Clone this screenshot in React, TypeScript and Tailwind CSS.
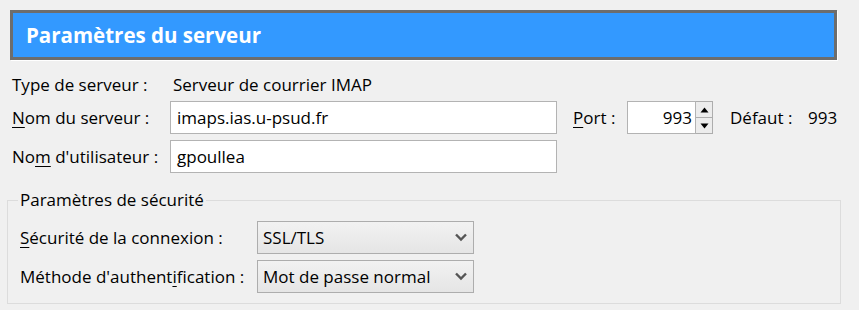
function Chevron() {
  return (
    <svg width="12" height="9" viewBox="0 0 12 9" className="shrink-0">
      <path d="M1 1.5 L6 6.5 L11 1.5" fill="none" stroke="#555" strokeWidth="2.4" />
    </svg>
  )
}

function Select({ value }: { value: string }) {
  return (
    <div className="flex h-[33px] w-[217px] items-center justify-between border border-[#adadad] bg-gradient-to-b from-[#f2f2f2] to-[#e5e5e5] pl-[5px] pr-[6px]">
      <span>{value}</span>
      <Chevron />
    </div>
  )
}

function Spinner() {
  return (
    <div className="flex h-[33px] w-[17px] flex-col border border-l-0 border-[#adadad]">
      <div className="flex flex-1 items-center justify-center border-b border-[#adadad] bg-[#ececec]">
        <svg width="9" height="6" viewBox="0 0 9 6">
          <path d="M0.5 5.5 L4.5 0.5 L8.5 5.5 Z" fill="#000" />
        </svg>
      </div>
      <div className="flex flex-1 items-center justify-center bg-[#ececec]">
        <svg width="9" height="6" viewBox="0 0 9 6">
          <path d="M0.5 0.5 L4.5 5.5 L8.5 0.5 Z" fill="#000" />
        </svg>
      </div>
    </div>
  )
}

function Key({ children }: { children: string }) {
  return <span className="underline decoration-1 underline-offset-[3px]">{children}</span>
}

export default function App() {
  return (
    <div className="h-[310px] w-[859px] overflow-hidden bg-[#f0f0f0] pt-[10px] font-['Open_Sans',sans-serif] text-[17px] text-black">
      <div className="ml-[10px] flex h-[50px] w-[827px] items-center border-[3px] border-[#6d6d6d] bg-[#3399ff] pl-[13px] shadow-[1px_1px_0_#fff]">
        <span className="text-[20.5px] font-bold text-white">Paramètres du serveur</span>
      </div>

      <div className="ml-[12px] mt-[8px] flex h-[33px] items-center">
        <span className="w-[161px]">Type de serveur :</span>
        <span>Serveur de courrier IMAP</span>
      </div>

      <div className="ml-[12px] flex h-[33px] items-center">
        <span className="w-[158px]">
          <Key>N</Key>om du serveur :
        </span>
        <div className="flex h-[33px] w-[387px] items-center border border-[#b3b3b3] bg-white pl-[6px]">
          imaps.ias.u-psud.fr
        </div>
        <span className="ml-[16px] w-[54px]">
          <Key>P</Key>ort :
        </span>
        <div className="flex h-[33px] w-[69px] items-center justify-end border border-[#b3b3b3] bg-white pr-[3px]">
          993
        </div>
        <Spinner />
        <span className="ml-[17px] w-[78px]">Défaut :</span>
        <span>993</span>
      </div>

      <div className="ml-[12px] mt-[6px] flex h-[33px] items-center">
        <span className="w-[158px]">
          No<Key>m</Key> d'utilisateur :
        </span>
        <div className="flex h-[33px] w-[387px] items-center border border-[#b3b3b3] bg-white pl-[6px]">
          gpoullea
        </div>
      </div>

      <fieldset className="ml-[7px] mt-[16px] w-[834px] border border-[#dcdcdc] pb-[10px] pl-[12px]">
        <legend className="ml-[-2px] px-[2px] leading-[22px]">Paramètres de sécurité</legend>
        <div className="mt-[10px] flex flex-col gap-[6px]">
          <div className="flex items-center">
            <span className="w-[237px]">
              <Key>S</Key>écurité de la connexion :
            </span>
            <Select value="SSL/TLS" />
          </div>
          <div className="flex items-center">
            <span className="w-[237px]">
              Méthode d'authent<Key>i</Key>fication :
            </span>
            <Select value="Mot de passe normal" />
          </div>
        </div>
      </fieldset>
    </div>
  )
}
